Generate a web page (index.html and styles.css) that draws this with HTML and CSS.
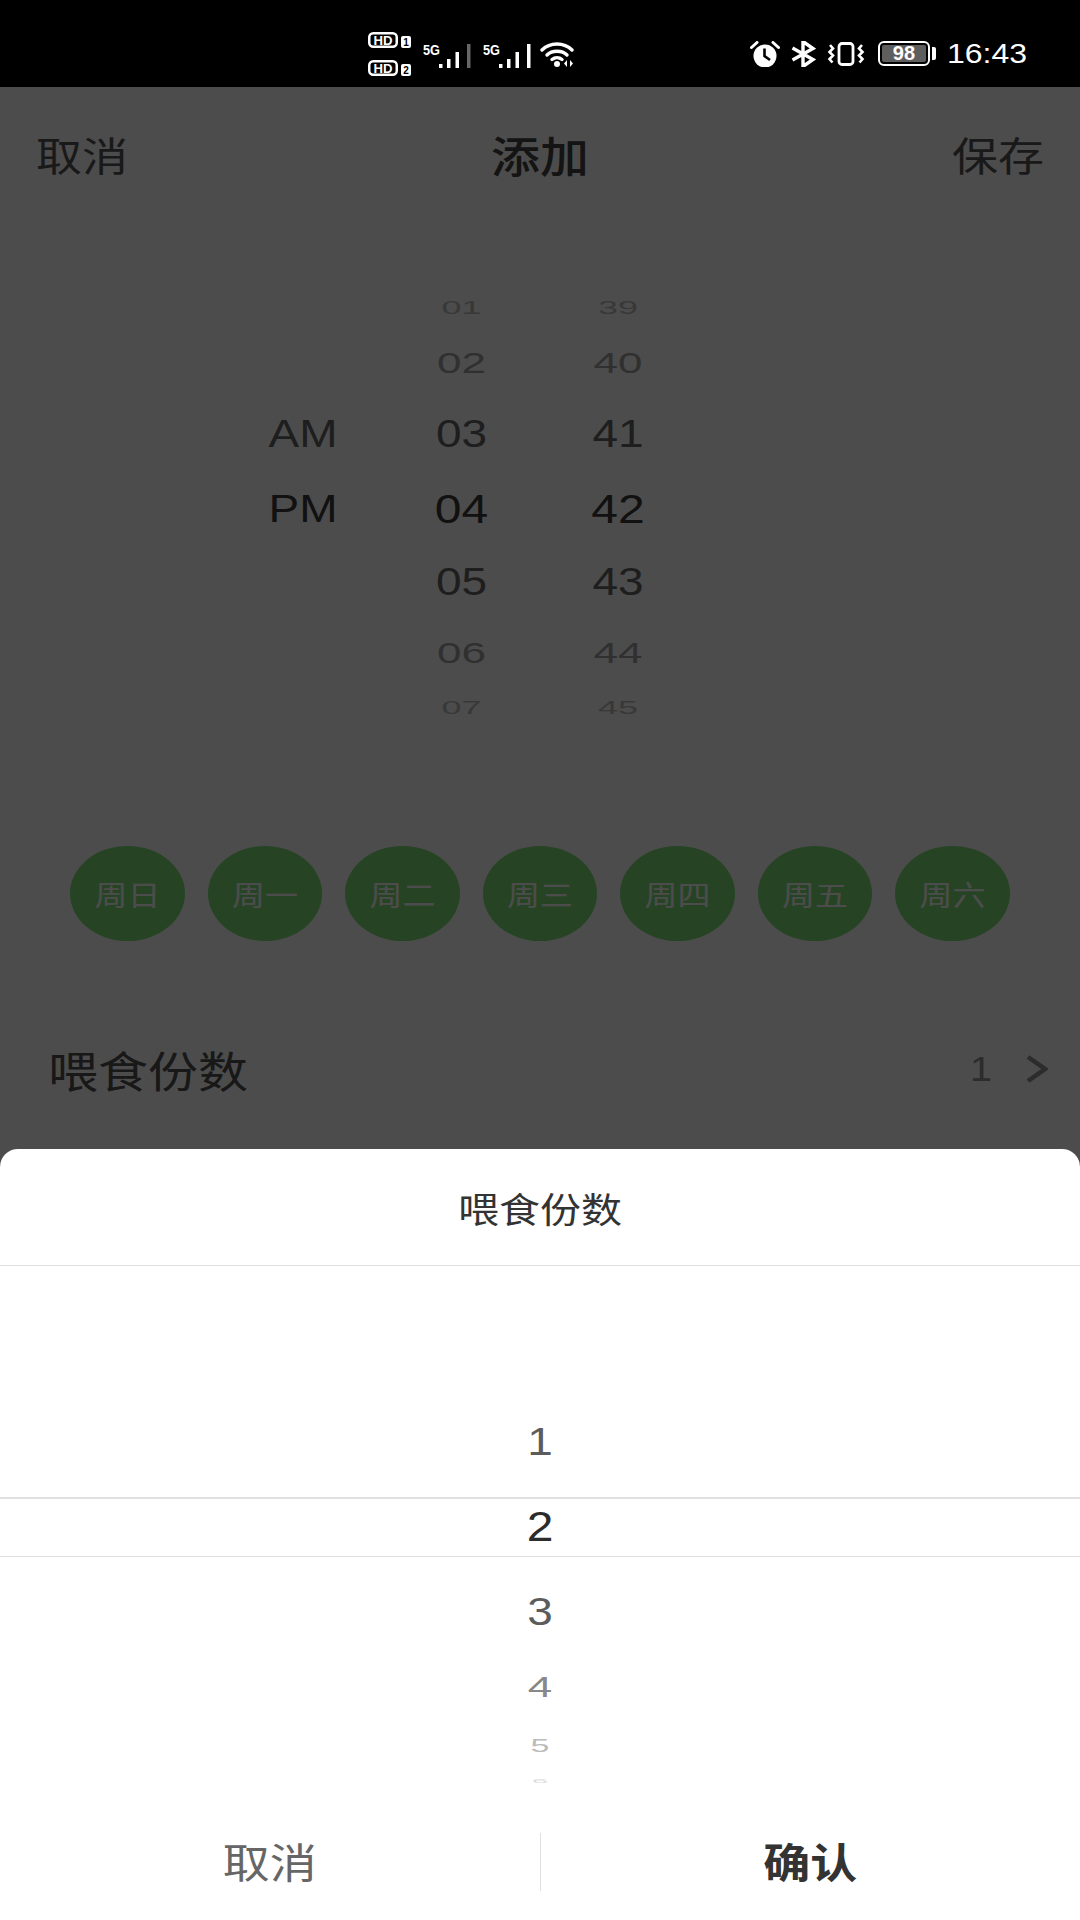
FILE: index.html
```html
<!DOCTYPE html>
<html lang="zh-CN">
<head>
    <meta charset="UTF-8">
    <meta name="viewport" content="width=device-width, initial-scale=1.0">
    <title>添加</title>
    <link rel="stylesheet" href="styles.css">
</head>
<body>
    <!-- 状态栏 -->
    <div class="statusbar">
        <div class="status-left">
            <div class="hd-stack">
                <svg class="hd" width="44" height="16" viewBox="0 0 44 16">
                    <rect x="1.250" y="1.250" width="27.500" height="13.500" rx="4" fill="none" stroke="#fff" stroke-width="2.500"/>
                    <text x="15" y="12.500" class="hd-text" textLength="19" lengthAdjust="spacingAndGlyphs">HD</text>
                    <rect x="33" y="4" width="10" height="12" rx="2" fill="#fff"/>
                    <text x="38" y="13.500" class="hd-num">1</text>
                </svg>
                <svg class="hd" width="44" height="16" viewBox="0 0 44 16">
                    <rect x="1.250" y="1.250" width="27.500" height="13.500" rx="4" fill="none" stroke="#fff" stroke-width="2.500"/>
                    <text x="15" y="12.500" class="hd-text" textLength="19" lengthAdjust="spacingAndGlyphs">HD</text>
                    <rect x="33" y="4" width="10" height="12" rx="2" fill="#fff"/>
                    <text x="38" y="13.500" class="hd-num">2</text>
                </svg>
            </div>
            <svg class="signal" width="49" height="28" viewBox="0 -2 49 28">
                <text x="0" y="12" class="net-text" textLength="17" lengthAdjust="spacingAndGlyphs">5G</text>
                <rect x="16" y="21" width="3.500" height="4" fill="#fff"/>
                <rect x="24" y="16" width="3.500" height="9" fill="#fff"/>
                <rect x="32.500" y="9" width="3.500" height="16" fill="#fff"/>
                <rect x="44" y="1" width="3.500" height="24" fill="#666"/>
            </svg>
            <svg class="signal" width="49" height="28" viewBox="0 -2 49 28">
                <text x="0" y="12" class="net-text" textLength="17" lengthAdjust="spacingAndGlyphs">5G</text>
                <rect x="16" y="21" width="3.500" height="4" fill="#fff"/>
                <rect x="24" y="16" width="3.500" height="9" fill="#fff"/>
                <rect x="32.500" y="9" width="3.500" height="16" fill="#fff"/>
                <rect x="44" y="1" width="3.500" height="24" fill="#fff"/>
            </svg>
            <svg class="wifi" width="36" height="26" viewBox="0 0 36 26">
                <g fill="none" stroke="#fff" stroke-width="3.400" stroke-linecap="round">
                    <path d="M2 9C10 1 24 1 32 9"/>
                    <path d="M7 14C12 9 22 9 27 14"/>
                    <path d="M12 18.500C15 16 19 16 22 18.500"/>
                </g>
                <circle cx="17" cy="23" r="3" fill="#fff"/>
                <path d="M27 19L24 22.500L27 26ZM30 19L33 22.500L30 26Z" fill="#fff"/>
            </svg>
        </div>
        <div class="status-right">
            <svg width="30" height="26" viewBox="0 0 30 26">
                <circle cx="15" cy="15" r="11.500" fill="#fff"/>
                <path d="M14.500 7.500V15L20 19" fill="none" stroke="#000" stroke-width="2.600"/>
                <path d="M1.500 6.500L7 1.500M28.500 6.500L23 1.500" stroke="#fff" stroke-width="3" stroke-linecap="round"/>
            </svg>
            <svg width="25" height="26" viewBox="0 0 25 26">
                <path d="M1.500 7L22 18.500L12 25.500V0.500L22 7.500L1.500 19" fill="none" stroke="#fff" stroke-width="3.400"/>
            </svg>
            <svg width="38" height="24" viewBox="0 0 38 24">
                <rect x="12" y="1.500" width="14" height="21" rx="3" fill="none" stroke="#fff" stroke-width="2.800"/>
                <path d="M3 3L6 6.500L2.500 10L6 13.500L2.500 17L5.500 20.500M35 3L32 6.500L35.500 10L32 13.500L35.500 17L32.500 20.500" fill="none" stroke="#fff" stroke-width="2.600"/>
            </svg>
            <div class="battery">
                <div class="battery-body"><span class="battery-level">98</span></div>
                <div class="battery-nub"></div>
            </div>
            <span class="clock">16:43</span>
        </div>
    </div>

    <div class="screen">
        <header class="topbar">
            <span class="squash">取消</span>
            <h1 class="squash">添加</h1>
            <span class="squash">保存</span>
        </header>

        <!-- 时间滚轮 -->
        <section class="time-wheel">
            <div class="wheel-col ampm-col">
                <div class="item mid"><span>AM</span></div>
                <div class="item sel"><span>PM</span></div>
            </div>
            <div class="wheel-col">
                <div class="item far"><span>01</span></div>
                <div class="item near"><span>02</span></div>
                <div class="item mid"><span>03</span></div>
                <div class="item sel"><span>04</span></div>
                <div class="item mid"><span>05</span></div>
                <div class="item near"><span>06</span></div>
                <div class="item far"><span>07</span></div>
            </div>
            <div class="wheel-col">
                <div class="item far"><span>39</span></div>
                <div class="item near"><span>40</span></div>
                <div class="item mid"><span>41</span></div>
                <div class="item sel"><span>42</span></div>
                <div class="item mid"><span>43</span></div>
                <div class="item near"><span>44</span></div>
                <div class="item far"><span>45</span></div>
            </div>
        </section>

        <div class="days">
            <div class="day"><span class="squash">周日</span></div>
            <div class="day"><span class="squash">周一</span></div>
            <div class="day"><span class="squash">周二</span></div>
            <div class="day"><span class="squash">周三</span></div>
            <div class="day"><span class="squash">周四</span></div>
            <div class="day"><span class="squash">周五</span></div>
            <div class="day"><span class="squash">周六</span></div>
        </div>

        <div class="portion-row">
            <span class="portion-label squash">喂食份数</span>
            <span class="portion-value squash">1</span>
            <svg class="chevron" width="22" height="28" viewBox="0 0 22 28">
                <path d="M2 2L19 14L2 26" fill="none" stroke="#939393" stroke-width="4.500"/>
            </svg>
        </div>

        <div class="scrim"></div>
    </div>

    <!-- 底部弹窗 -->
    <div class="sheet">
        <div class="sheet-title"><span class="squash">喂食份数</span></div>
        <div class="sheet-wheel">
            <div class="band"></div>
            <div class="num n-side"><span>1</span></div>
            <div class="num n-sel"><span>2</span></div>
            <div class="num n-side"><span>3</span></div>
            <div class="num n-4"><span>4</span></div>
            <div class="num n-5"><span>5</span></div>
            <div class="num n-6"><span>6</span></div>
        </div>
        <div class="sheet-actions">
            <button class="action action-cancel"><span class="squash">取消</span></button>
            <button class="action action-ok"><span class="squash">确认</span></button>
        </div>
    </div>
</body>
</html>
```

FILE: styles.css
```css
/* 全局 */
body {
    margin: 0;
    width: 1080px;
    height: 1920px;
    position: relative;
    overflow: hidden;
    background-color: #ffffff;
    font-family: "Liberation Sans", "Noto Sans CJK SC", sans-serif;
}

/* 截图被横向拉伸过，文字统一压扁一点 */
.squash {
    display: inline-block;
    transform: scaleY(0.87);
}

/* 状态栏 */
.statusbar {
    height: 87px;
    background-color: #000000;
    color: #ffffff;
    display: flex;
    justify-content: space-between;
    align-items: center;
    padding: 20px 53px 0 368px;
    box-sizing: border-box;
}

.status-left {
    display: flex;
    align-items: center;
}

.status-right {
    display: flex;
    align-items: center;
    gap: 11px;
}

.hd-stack {
    display: flex;
    flex-direction: column;
    gap: 12px;
    margin-right: 11px;
}

.hd {
    display: block;
}

.hd-text {
    font-size: 13px;
    font-weight: 700;
    fill: #ffffff;
    text-anchor: middle;
}

.hd-num {
    font-size: 10px;
    font-weight: 700;
    fill: #000000;
    text-anchor: middle;
}

.net-text {
    font-size: 15px;
    font-weight: 700;
    fill: #ffffff;
}

.signal {
    margin-right: 11px;
    margin-top: 2px;
}

.wifi {
    margin-left: -3px;
}

.battery {
    display: flex;
    align-items: center;
    gap: 2px;
    margin-left: 2px;
}

.battery-body {
    width: 52px;
    height: 25px;
    border: 2.500px solid #ffffff;
    border-radius: 6px;
    box-sizing: border-box;
    padding: 2px;
    display: flex;
}

.battery-level {
    flex: 1;
    background-color: #5e5e5e;
    border-radius: 2px;
    font-size: 20px;
    font-weight: 700;
    line-height: 16px;
    text-align: center;
}

.battery-nub {
    width: 4px;
    height: 13px;
    background-color: #ffffff;
    border-radius: 0 2px 2px 0;
}

.clock {
    font-size: 32px;
    display: inline-block;
    transform: scaleY(0.87);
}

/* 页面主体，上面盖一层遮罩 */
.screen {
    position: relative;
    height: 1833px;
    background-color: #ffffff;
}

.scrim {
    position: absolute;
    top: 0;
    left: 0;
    right: 0;
    bottom: 0;
    background-color: rgba(0, 0, 0, 0.7);
}

.topbar {
    height: 134px;
    display: flex;
    justify-content: space-between;
    align-items: center;
    padding: 0 36px;
    font-size: 46px;
    color: #555555;
}

.topbar h1 {
    margin: 0;
    font-size: 49px;
    font-weight: 500;
    color: #444444;
}

/* 时间滚轮 */
.time-wheel {
    margin-top: 66px;
    padding-left: 223px;
    display: grid;
    grid-template-columns: 160px 157px 156px;
}

.wheel-col {
    display: flex;
    flex-direction: column;
    align-items: center;
}

.ampm-col {
    padding-top: 110px;
}

.item {
    display: flex;
    align-items: center;
    justify-content: center;
}

.item span {
    display: block;
}

.far {
    height: 42px;
    font-size: 36px;
    color: #bbbbbb;
}

.far span {
    transform: scaleY(0.52);
}

.near {
    height: 68px;
    font-size: 44px;
    color: #a0a0a0;
}

.near span {
    transform: scaleY(0.65);
}

.mid {
    height: 74px;
    font-size: 46px;
    color: #666666;
}

.mid span {
    transform: scaleY(0.84);
}

.sel {
    height: 74px;
    font-size: 48px;
    color: #3a3a3a;
}

.sel span {
    transform: scaleY(0.85);
}

.ampm-col .item {
    font-size: 46px;
}

/* 星期 */
.days {
    margin-top: 117px;
    display: flex;
    justify-content: center;
    gap: 23px;
}

.day {
    width: 114.500px;
    height: 95px;
    border-radius: 50%;
    background-color: #7fe378;
    color: #ffffff;
    font-size: 33px;
    display: flex;
    align-items: center;
    justify-content: center;
}

/* 喂食份数 */
.portion-row {
    margin-top: 78px;
    height: 100px;
    padding: 0 32px 0 48px;
    display: flex;
    align-items: center;
}

.portion-label {
    flex: 1;
    font-size: 50px;
    color: #505050;
}

.portion-value {
    font-size: 40px;
    color: #939393;
    margin-right: 34px;
}

/* 底部弹窗 */
.sheet {
    position: absolute;
    left: 0;
    right: 0;
    bottom: 0;
    height: 771px;
    background-color: #ffffff;
    border-radius: 18px 18px 0 0;
    display: flex;
    flex-direction: column;
}

.sheet-title {
    height: 116px;
    border-bottom: 1px solid #e0e0e0;
    font-size: 41px;
    color: #333333;
    display: flex;
    align-items: center;
    justify-content: center;
}

.sheet-wheel {
    position: relative;
    flex: 1;
    padding-top: 133px;
}

.band {
    position: absolute;
    top: 231px;
    left: 0;
    right: 0;
    height: 57px;
    border-top: 2px solid #e0e0e0;
    border-bottom: 1px solid #e0e0e0;
}

.num {
    display: flex;
    align-items: center;
    justify-content: center;
}

.num span {
    display: block;
}

.n-side {
    height: 85px;
    font-size: 46px;
    color: #5c5c5c;
}

.n-side span {
    transform: scaleY(0.84);
}

.n-sel {
    height: 85px;
    font-size: 48px;
    color: #2c2c2c;
}

.n-sel span {
    transform: scaleY(0.87);
}

.n-4 {
    height: 65px;
    font-size: 44px;
    color: #888888;
}

.n-4 span {
    transform: scaleY(0.65);
}

.n-5 {
    height: 53px;
    font-size: 34px;
    color: #bbbbbb;
}

.n-5 span {
    transform: scaleY(0.55);
}

.n-6 {
    height: 18px;
    font-size: 30px;
    color: #dddddd;
}

.n-6 span {
    transform: scaleY(0.2);
}

.sheet-actions {
    height: 87px;
    display: flex;
}

.action {
    flex: 1;
    height: 58px;
    border: none;
    background: none;
    padding: 4px 0 0;
    line-height: 40px;
    font-family: inherit;
    font-size: 47px;
}

.action-cancel {
    color: #666666;
    border-right: 1px solid #e0e0e0;
}

.action-ok {
    color: #333333;
    font-weight: 700;
}
```
